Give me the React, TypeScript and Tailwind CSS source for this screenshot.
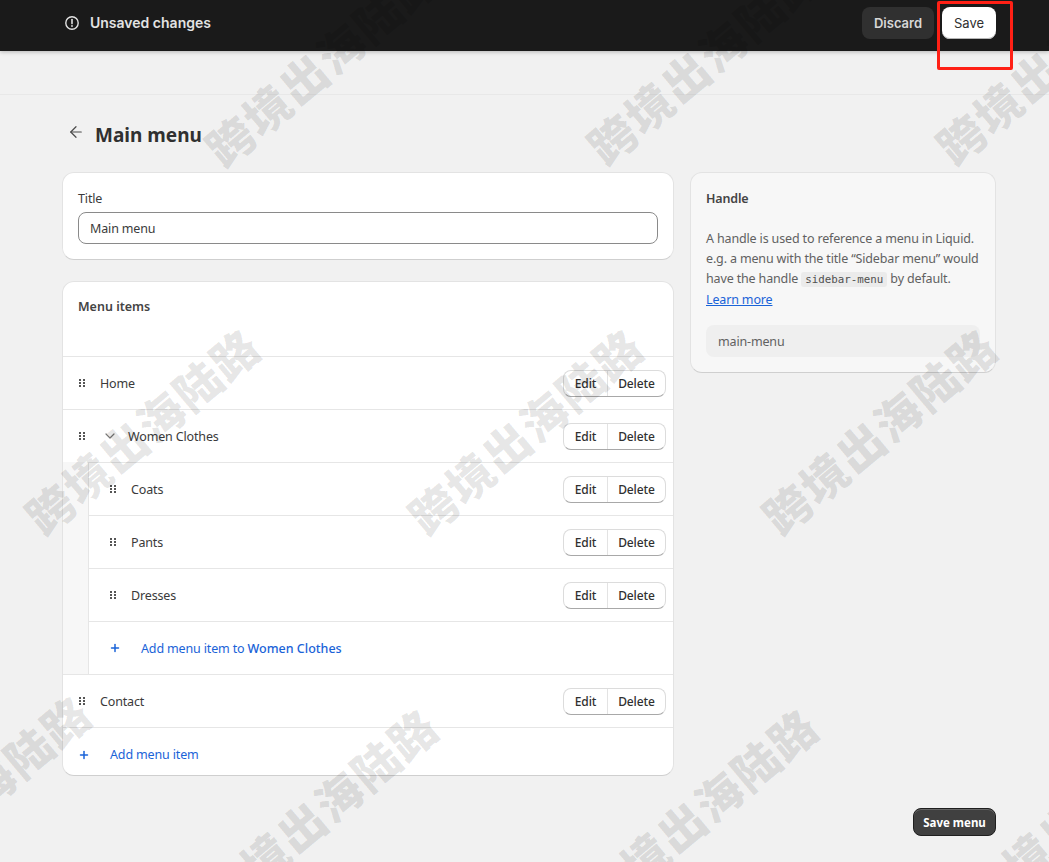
import { ArrowLeft, ChevronDown, Plus } from "lucide-react";

const body = "font-['Noto_Sans','Liberation_Sans',sans-serif]";
const inter = "font-['Inter','Liberation_Sans',sans-serif]";
const copy = "text-[12.5px] tracking-[-0.15px]";

function Grip() {
  return (
    <svg width="6" height="8" viewBox="0 0 6 8" className="shrink-0 fill-[#555555]">
      {[0, 4].map((x) =>
        [0, 3, 6].map((y) => <rect key={`${x}-${y}`} x={x} y={y} width="2" height="2" />),
      )}
    </svg>
  );
}

function Actions() {
  return (
    <div className={`flex h-[27px] shrink-0 rounded-lg border border-[#dcdcdc] border-b-[#a8a8a8] bg-white text-[12px] font-medium tracking-[-0.1px] text-[#303030] ${body}`}>
      <span className="flex w-[44px] items-center justify-center border-r border-[#e3e3e3] pt-[1px]">Edit</span>
      <span className="flex w-[57px] items-center justify-center pt-[1px]">Delete</span>
    </div>
  );
}

function Row({ label, nested, chevron }: { label: string; nested?: boolean; chevron?: boolean }) {
  return (
    <div className={`flex h-[53px] items-center border-t border-[#e6e6e6] pr-[7px] ${nested ? "pl-[21px]" : "pl-[16px]"}`}>
      <Grip />
      {chevron && <ChevronDown size={16} strokeWidth={1.8} className="ml-[17px] text-[#777777]" />}
      <span className={`pt-[2px] text-[#3a3a3a] ${copy} ${chevron ? "ml-[10px]" : "ml-[15px]"}`}>{label}</span>
      <div className="flex-1" />
      <Actions />
    </div>
  );
}

const marks = [
  "left-[322px] top-[62px]",
  "left-[704px] top-[60px]",
  "left-[1053px] top-[60px]",
  "left-[142px] top-[430px]",
  "left-[525px] top-[430px]",
  "left-[879px] top-[430px]",
  "left-[-27px] top-[797px]",
  "left-[320px] top-[810px]",
  "left-[700px] top-[810px]",
  "left-[1082px] top-[810px]",
];

export default function App() {
  return (
    <div className={`relative h-[862px] w-full overflow-hidden bg-[#f1f1f1] ${body}`}>
      <header className={`flex h-[51px] items-start justify-between bg-[#1a1a1a] pl-[65px] pr-[53px] shadow-[0_1px_4px_rgba(0,0,0,0.25)] ${inter}`}>
        <div className="mt-[13px] flex items-center gap-[11px] text-sm font-semibold leading-5 text-[#e3e3e3]">
          <svg width="14" height="14" viewBox="0 0 14 14" fill="none" stroke="#e3e3e3" strokeWidth="1.4">
            <circle cx="7" cy="7" r="6.2" />
            <path d="M7 3.6v4" strokeLinecap="round" strokeWidth="1.6" />
            <circle cx="7" cy="10" r="0.9" fill="#e3e3e3" stroke="none" />
          </svg>
          <span>Unsaved changes</span>
        </div>
        <div className="mt-[7px] flex items-center gap-2">
          <button className="h-8 w-[72px] rounded-lg bg-[#303030] pt-[2px] text-[13px] font-semibold text-[#d8d8d8]">Discard</button>
          <button className="h-8 w-[54px] rounded-lg bg-white pt-[2px] text-[13px] font-normal text-[#303030] shadow-[inset_0_-1px_0_#b5b5b5]">Save</button>
        </div>
      </header>

      <div className="h-[44px] border-b border-[#e8e8e8]" />

      <main className="pl-[62px] pr-[53px]">
        <div className="flex h-[77px] items-center">
          <ArrowLeft size={18} strokeWidth={1.6} className="ml-[5px] -mt-[4px] text-[#4a4a4a]" />
          <h1 className="ml-[10px] pt-[4px] text-[19px] font-bold text-[#303030]">Main menu</h1>
        </div>

        <div className="flex items-start gap-4">
          <div className="flex w-[612px] flex-col gap-[21px]">
            <section className="h-[88px] rounded-xl border border-[#e3e3e3] border-b-[#cfcfcf] bg-white px-[15px] pt-[16px]">
              <label className={`block leading-5 text-[#3a3a3a] ${copy}`}>Title</label>
              <div className={`mt-[3px] flex h-8 items-center rounded-lg border border-[#8a8a8a] bg-white px-[11px] pt-[2px] text-[#3a3a3a] ${copy}`}>Main menu</div>
            </section>

            <section className="overflow-hidden rounded-xl border border-[#e3e3e3] border-b-[#cfcfcf] bg-white">
              <div className="h-[74px] px-[15px] pt-[15px] text-[12.5px] font-semibold leading-5 text-[#444444]">Menu items</div>
              <Row label="Home" />
              <Row label="Women Clothes" chevron />
              <div className="ml-[25px] border-l border-[#e6e6e6] shadow-[-25px_0_0_#f7f7f7]">
                <Row label="Coats" nested />
                <Row label="Pants" nested />
                <Row label="Dresses" nested />
                <div className="flex h-[53px] items-center border-t border-[#e6e6e6] pl-[20px] text-[#1a63d8]">
                  <Plus size={12} strokeWidth={3} />
                  <span className={`ml-[20px] pt-[2px] ${copy}`}>Add menu item to <b className="font-medium tracking-normal">Women Clothes</b></span>
                </div>
              </div>
              <Row label="Contact" />
              <div className="flex h-[48px] items-center border-t border-[#e6e6e6] pl-[15px] pt-[7px] text-[#1a63d8]">
                <Plus size={12} strokeWidth={3} />
                <span className={`ml-[20px] ${copy}`}>Add menu item</span>
              </div>
            </section>
          </div>

          <aside className={`w-[306px] rounded-xl border border-[#e3e3e3] border-b-[#cfcfcf] bg-[#f7f7f7] px-[15px] pb-[15px] pt-[16px] leading-5 text-[#616161] ${copy}`}>
            <h2 className="font-semibold text-[#444444]">Handle</h2>
            <p className="mt-[20px] whitespace-nowrap">
              A handle is used to reference a menu in Liquid.
              <br />
              e.g. a menu with the title “Sidebar menu” would
              <br />
              have the handle{" "}
              <code className="rounded-[3px] bg-[#ebebeb] px-1 py-[1px] font-['DejaVu_Sans_Mono','Liberation_Mono',monospace] text-[10.8px] tracking-normal text-[#505050]">sidebar-menu</code>{" "}
              by default.
            </p>
            <a className="block text-[#1a63d8] underline">Learn more</a>
            <div className="mt-[15px] flex h-8 items-center rounded-lg bg-[#efefef] px-3 pt-[2px] text-[#616161]">main-menu</div>
          </aside>
        </div>

        <div className="mt-[32px] flex justify-end">
          <button className="h-[28px] w-[83px] rounded-lg border border-[#1f1f1f] bg-[#404040] pt-[1px] text-[11.5px] font-bold text-white shadow-[inset_0_1px_0_#666666]">Save menu</button>
        </div>
      </main>

      <div className="absolute left-[937px] top-[1px] h-[69px] w-[76px] rounded-[2px] border-[3px] border-[#ff2015]" />

      {marks.map((m) => (
        <div
          key={m}
          className={`pointer-events-none absolute ${m} -translate-x-1/2 -translate-y-1/2 -rotate-[40deg] whitespace-nowrap font-['Noto_Sans_CJK_SC',sans-serif] text-[46px] font-black tracking-[2px] text-black/10`}
        >
          跨境出海陆路
        </div>
      ))}
    </div>
  );
}
